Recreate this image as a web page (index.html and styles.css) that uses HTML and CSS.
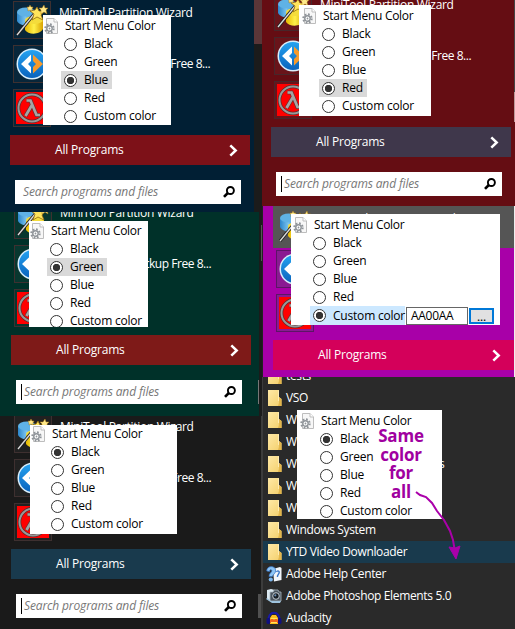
FILE: index.html
```
<!DOCTYPE html>
<html lang="en">
<head>
<meta charset="utf-8">
<title>Start Menu Color</title>
<link rel="stylesheet" href="styles.css">
</head>
<body>
<svg class="defs" aria-hidden="true">
  <defs>
    <linearGradient id="gBlue" x1="0" y1="0" x2="0" y2="1"><stop offset="0" stop-color="#25a2f0"/><stop offset="1" stop-color="#0a63bd"/></linearGradient>
    <linearGradient id="gFolder" x1="0" y1="0" x2="1" y2="1"><stop offset="0" stop-color="#ffe9a6"/><stop offset="1" stop-color="#f3cf6b"/></linearGradient>
    <linearGradient id="gYellow" x1="0" y1="0" x2="1" y2="0"><stop offset="0" stop-color="#e8b800"/><stop offset=".5" stop-color="#fff04a"/><stop offset="1" stop-color="#d9a300"/></linearGradient>
    <linearGradient id="gDisk" x1="0" y1="0" x2="1" y2="0"><stop offset="0" stop-color="#2b86cc"/><stop offset=".5" stop-color="#7cc4ee"/><stop offset="1" stop-color="#2273b5"/></linearGradient>
  </defs>
  <symbol id="wizard" viewBox="0 0 32 32">
    <path d="M1 8v9c2 5 13 6 17 3V8z" fill="url(#gDisk)"/>
    <ellipse cx="10" cy="8" rx="9" ry="4.500" fill="#5fb2e6"/>
    <path d="M9 17v9c3 5 15 5 18-1v-9z" fill="url(#gYellow)"/>
    <ellipse cx="18" cy="16" rx="9" ry="4" fill="#f4dc3c"/>
    <path d="M1 31L19 9" stroke="#222" stroke-width="3"/>
    <path d="M1 31L19 9" stroke="#ddd" stroke-width="1.300"/>
    <path d="M21 3l2 4 5 0-3 4 2 5-6-3-5 3 2-6-4-3 5-1z" fill="#ffe45c" stroke="#8e6812" stroke-width=".8"/>
    <path d="M28 1l1 3 3 0-2 2 1 4-3-2-3 2 0-4-2-2 3 0zM14 1l1 2 2 0-1 2 0 2-2-1-2 1 0-2-1-2 2 0z" fill="#ffe98a" stroke="#a97b12" stroke-width=".5"/>
  </symbol>
  <symbol id="backup" viewBox="0 0 32 32">
    <circle cx="16" cy="16" r="15.500" fill="#d9eefb"/>
    <circle cx="16" cy="16" r="14" fill="url(#gBlue)"/>
    <path d="M15 6.500L5 16l10 9.500v-6.500l-3-3 3-3z" fill="#fff"/>
    <path d="M17 6.500L27 16l-10 9.500v-6.500l3-3-3-3z" fill="#f79a2b"/>
  </symbol>
  <symbol id="lambda" viewBox="0 0 32 32">
    <path d="M0 0h32v32H0z" fill="#f00"/>
    <circle cx="16" cy="16" r="13.500" fill="none" stroke="#5c2c2c" stroke-width="3.400"/>
    <circle cx="16" cy="16" r="13.500" fill="none" stroke="#999" stroke-width="2"/>
    <path d="M10.500 8.500h4l6 14.500h3.500M16 13L9.500 24" fill="none" stroke="#6b3030" stroke-width="4.200"/>
    <path d="M10.500 8.500h4l6 14.500h3.500M16 13L9.500 24" fill="none" stroke="#a5a5a5" stroke-width="2.700"/>
  </symbol>
  <symbol id="page" viewBox="0 0 14 16">
    <path d="M2.500.5h7.500L13.500 4v11.500h-11z" fill="#f7f7f7" stroke="#bdbdbd"/>
    <path d="M10 .5V4h3.500" fill="#fff" stroke="#bdbdbd"/>
    <circle cx="5.500" cy="10.500" r="4.200" fill="none" stroke="#8f9499" stroke-width="2" stroke-dasharray="1.700 1.600"/>
    <circle cx="5.500" cy="10.500" r="2.700" fill="#fff" stroke="#8f9499" stroke-width="1.400"/>
    <circle cx="5.500" cy="10.500" r=".9" fill="#8f9499"/>
  </symbol>
  <symbol id="chevron" viewBox="0 0 9 13"><path d="M1.300 1.300L6.700 6.500 1.300 11.700" fill="none" stroke="#fff" stroke-width="2.500"/></symbol>
  <symbol id="search" viewBox="0 0 12 12"><circle cx="7.400" cy="4.500" r="3.500" fill="none" stroke="#000" stroke-width="1.900"/><path d="M4.800 7L1 10.900" stroke="#000" stroke-width="2.600"/></symbol>
  <symbol id="folder" viewBox="0 0 14 16">
    <path d="M0 0h11v7l2.500 2v7H0z" fill="url(#gFolder)"/>
    <path d="M11 7v6l-1 3h3.500V9z" fill="#e3b64c"/>
    <path d="M10.500.5V11" stroke="#fff0c0" stroke-width=".8"/>
  </symbol>
  <symbol id="help" viewBox="0 0 16 16">
    <path d="M7 3l7-2 1.500 1v12L8 15.500z" fill="#f2f6fb"/>
    <path d="M.7 5C.7-.5 9-.8 9.600 4c.5 3.500-2.600 4-3.200 6.500H3C3 7 6 6.500 5.800 4.600 5.500 3 3.500 3.500 3.600 5.500z" fill="#8cc4f5" stroke="#2f6fc0" stroke-width=".7"/>
    <circle cx="4.800" cy="13.500" r="2.100" fill="#7ab5ec"/>
    <path d="M10.500 6c1-2 3.500-1 2.500 1.200L11.500 10v1" fill="none" stroke="#3b78c8" stroke-width="1.400"/>
  </symbol>
  <symbol id="camera" viewBox="0 0 16 16">
    <path d="M1 2l4-1 4 1v10l-5 1-3-2z" fill="#dce9f2"/>
    <path d="M4 4h3l1-2h4l1 2h2v9H4z" fill="#4b555f" stroke="#aab8c2" stroke-width=".8"/>
    <circle cx="10" cy="8" r="3.300" fill="#171d24" stroke="#c3ccd4"/>
    <circle cx="9.300" cy="7.300" r="1.100" fill="#6b8fb5"/>
    <path d="M0 11l6 4h8l1-2H5L1 10z" fill="#9fc4df"/>
  </symbol>
  <symbol id="audacity" viewBox="0 0 16 16">
    <path d="M2.500 11C1 0 15 0 13.500 11" fill="none" stroke="#1a1aa8" stroke-width="2"/>
    <path d="M4 8l2-3h4l2 3v6H4z" fill="#ffbf1c"/>
    <path d="M4 10l2-2 2 2 2-2 2 2v3H4z" fill="#f0651c"/>
    <path d="M5 8.500h6M5 12.500h6" stroke="#ffe55a" stroke-width="1.200"/>
    <rect x=".5" y="8" width="3.500" height="6" rx="1.500" fill="#101080"/><rect x="12" y="8" width="3.500" height="6" rx="1.500" fill="#101080"/>
  </symbol>
</svg>

<main class="board">
  <div class="column left">
    <section class="panel blue">
      <ul class="programs">
        <li><span class="cell"><svg><use href="#wizard"/></svg></span><span class="name raised">MiniTool Partition Wizard</span></li>
        <li><span class="cell"><svg><use href="#backup"/></svg></span><span class="name long">EaseUS Todo Backup Free 8...</span></li>
        <li><span class="cell"><svg><use href="#lambda"/></svg></span></li>
      </ul>
      <div class="all"><span>All Programs</span><svg><use href="#chevron"/></svg></div>
      <div class="search"><span>Search programs and files</span><svg><use href="#search"/></svg></div>
      <div class="popup">
        <h2><svg><use href="#page"/></svg>Start Menu Color</h2>
        <p><i></i>Black</p><p><i></i>Green</p><p class="on"><i></i>Blue</p><p><i></i>Red</p><p><i></i>Custom color</p>
      </div>
    </section>
    <section class="panel green">
      <ul class="programs">
        <li><span class="cell"><svg><use href="#wizard"/></svg></span><span class="name raised">MiniTool Partition Wizard</span></li>
        <li><span class="cell"><svg><use href="#backup"/></svg></span><span class="name long">EaseUS Todo Backup Free 8...</span></li>
        <li><span class="cell"><svg><use href="#lambda"/></svg></span></li>
      </ul>
      <div class="all"><span>All Programs</span><svg><use href="#chevron"/></svg></div>
      <div class="search caret"><span>Search programs and files</span><svg><use href="#search"/></svg></div>
      <div class="popup">
        <h2><svg><use href="#page"/></svg>Start Menu Color</h2>
        <p><i></i>Black</p><p class="on"><i></i>Green</p><p><i></i>Blue</p><p><i></i>Red</p><p><i></i>Custom color</p>
      </div>
    </section>
    <section class="panel black">
      <ul class="programs">
        <li><span class="cell"><svg><use href="#wizard"/></svg></span><span class="name raised">MiniTool Partition Wizard</span></li>
        <li><span class="cell"><svg><use href="#backup"/></svg></span><span class="name long">EaseUS Todo Backup Free 8...</span></li>
        <li><span class="cell"><svg><use href="#lambda"/></svg></span></li>
      </ul>
      <div class="all"><span>All Programs</span><svg><use href="#chevron"/></svg></div>
      <div class="search caret"><span>Search programs and files</span><svg><use href="#search"/></svg></div>
      <div class="popup">
        <h2><svg><use href="#page"/></svg>Start Menu Color</h2>
        <p class="on plain"><i></i>Black</p><p><i></i>Green</p><p><i></i>Blue</p><p><i></i>Red</p><p><i></i>Custom color</p>
      </div>
    </section>
  </div>

  <div class="column right">
    <section class="panel red">
      <ul class="programs">
        <li><span class="cell"><svg><use href="#wizard"/></svg></span><span class="name raised">MiniTool Partition Wizard</span></li>
        <li><span class="cell"><svg><use href="#backup"/></svg></span><span class="name long">EaseUS Todo Backup Free 8...</span></li>
        <li><span class="cell"><svg><use href="#lambda"/></svg></span></li>
      </ul>
      <div class="all"><span>All Programs</span><svg><use href="#chevron"/></svg></div>
      <div class="search caret"><span>Search programs and files</span><svg><use href="#search"/></svg></div>
      <div class="popup">
        <h2><svg><use href="#page"/></svg>Start Menu Color</h2>
        <p><i></i>Black</p><p><i></i>Green</p><p><i></i>Blue</p><p class="on"><i></i>Red</p><p><i></i>Custom color</p>
      </div>
    </section>
    <section class="panel purple">
      <ul class="programs">
        <li class="hover"><span class="cell"><svg><use href="#wizard"/></svg></span><span class="name raised">MiniTool Partition Wizard</span></li>
        <li><span class="cell"><svg><use href="#backup"/></svg></span></li>
        <li><span class="cell"><svg><use href="#lambda"/></svg></span></li>
      </ul>
      <div class="all"><span>All Programs</span><svg><use href="#chevron"/></svg></div>
      <div class="popup">
        <h2><svg><use href="#page"/></svg>Start Menu Color</h2>
        <p><i></i>Black</p><p><i></i>Green</p><p><i></i>Blue</p><p><i></i>Red</p>
        <div class="custom"><p class="on"><i></i>Custom color</p><span class="hex">AA00AA</span><span class="more">...</span></div>
      </div>
    </section>
    <section class="panel list">
      <ul class="folders">
        <li><svg class="f"><use href="#folder"/></svg>tests</li>
        <li><svg class="f"><use href="#folder"/></svg>VSO</li>
        <li><svg class="f"><use href="#folder"/></svg>W</li>
        <li><svg class="f"><use href="#folder"/></svg>W</li>
        <li><svg class="f"><use href="#folder"/></svg>Windows Administrative Tools</li>
        <li><svg class="f"><use href="#folder"/></svg>W</li>
        <li><svg class="f"><use href="#folder"/></svg>W</li>
        <li><svg class="f"><use href="#folder"/></svg>Windows System</li>
        <li class="hover"><svg class="f"><use href="#folder"/></svg>YTD Video Downloader</li>
        <li><svg><use href="#help"/></svg>Adobe Help Center</li>
        <li><svg><use href="#camera"/></svg>Adobe Photoshop Elements 5.0</li>
        <li><svg><use href="#audacity"/></svg>Audacity</li>
      </ul>
      <div class="popup">
        <h2><svg><use href="#page"/></svg>Start Menu Color</h2>
        <p class="on plain"><i></i>Black</p><p><i></i>Green</p><p><i></i>Blue</p><p><i></i>Red</p><p><i></i>Custom color</p>
      </div>
      <div class="note"><span>Same</span><span>color</span><span>for</span><span>all</span></div>
      <svg class="arrow" viewBox="0 0 60 74"><path d="M7 4l4 3 6 2 6 6 5 8 7 9 6 11 3 9 2 12" fill="none" stroke="#a0a" stroke-width="2"/><path d="M40 59l6 1 5-2-4 13z" fill="#a0a" stroke="#a0a"/></svg>
    </section>
  </div>
</main>
</body>
</html>
```
FILE: styles.css
```
* { box-sizing: border-box; margin: 0; padding: 0; }
body {
  width: 515px; height: 629px; overflow: hidden;
  font: 12px/18px "Open Sans", "Noto Sans", sans-serif;
  letter-spacing: -0.2px;
  background: #1b1b1b;
}
.defs { position: absolute; width: 0; height: 0; }
ul { list-style: none; }
.board { display: grid; grid-template-columns: 262px 253px; height: 629px; }
.left { display: grid; grid-template-rows: 212px 204px 213px; }
.right { display: grid; grid-template-rows: 206px 171px 252px; }
.panel {
  position: relative; overflow: hidden; min-height: 0;
  display: flex; flex-direction: column; justify-content: flex-end;
  white-space: nowrap;
}
.programs { flex: none; display: flex; flex-direction: column; gap: 6px; margin: 0 0 8px 3px; color: #fff; }
.programs li { display: flex; height: 38px; align-items: center; gap: 8px; }
.cell { flex: none; width: 38px; height: 38px; padding: 2px; border: 1px solid #3e3030; background: rgba(255,255,255,.03); }
.cell svg { display: block; width: 32px; height: 32px; }
.name { width: 152px; letter-spacing: -0.3px; }
.long { letter-spacing: -0.46px; }
.raised { margin-bottom: 14px; }
.all {
  flex: none; width: 240px; height: 30px; padding: 0 12px 0 45px;
  display: flex; align-items: center; justify-content: space-between; color: #fff;
}
.all svg { width: 9px; height: 13px; }
.search {
  flex: none; width: 226px; height: 24px; margin: 15px 0 0 5px; padding: 0 6px 0 8px;
  display: flex; align-items: center; justify-content: space-between;
  background: #fff; color: #777; font-style: italic; letter-spacing: -0.14px;
}
.search svg { width: 12px; height: 12px; }
.caret { padding-left: 5px; }
.caret span { border-left: 1px solid #000; padding-left: 2px; line-height: 16px; }

.blue {
  padding: 0 0 8px 10px;
  background:
    linear-gradient(#5a3638, #5a3638) 254px 0 / 8px 44px no-repeat,
    linear-gradient(#011f34, #011f34) 0 0 / 254px 100% no-repeat, #1b1b1b;
}
.blue .all { background: #7d1118; }
.green {
  padding: 0 0 12px 11px;
  background:
    linear-gradient(#555, #555) 261px 13px / 1px 36px no-repeat,
    linear-gradient(#777, #777) 258px 168px / 1px 24px no-repeat,
    linear-gradient(#003129, #003129) 0 0 / 259px 100% no-repeat, #1b1b1b;
}
.green .all { background: #7e1a18; }
.black {
  padding: 0 0 11px 11px; border-right: 1px solid #3c3c3c;
  background: linear-gradient(#505050, #505050) 258px 178px / 3px 24px no-repeat, #1a1a1a;
}
.black .all { background: #193a4d; }
.red {
  padding: 0 0 10px 9px;
  background: linear-gradient(#444 92px, #b99 92px, #b99 122px, #650d13 122px) 252px 0 / 1px 100% no-repeat, #650d13;
}
.red .cell { border-color: #47262a; }
.red .all { background: #3f374b; }
.purple {
  padding: 0 0 7px 10px; border-left: 1px solid #222;
  background: linear-gradient(#eee, #eee) 251px 0 / 1px 100% no-repeat, #a800a8;
}
.purple .all { background: #d4005a; width: 241px; padding-right: 13px; }
.purple .hover { background: #555; height: 45px; margin: 0 0 -4px -3px; padding-left: 3px; width: 241px; }
.purple .hover .cell { border-color: transparent; }
.purple .cell { border-color: #5c1566; background: #8a1a92; }
.purple .hover .cell { background: none; }
.list { background: #2a2a2a; border-left: 1px solid #3c3c3c; }

.popup {
  position: absolute; background: #fff; color: #000;
  display: flex; flex-direction: column; align-items: flex-start; overflow: hidden;
}
.popup h2 { position: relative; flex: none; font: inherit; height: 18px; padding-left: 22px; letter-spacing: -0.3px; }
.popup h2 svg { position: absolute; left: 1px; top: 1px; width: 14px; height: 16px; }
.popup p { flex: none; display: flex; align-items: center; gap: 7px; height: 18px; margin-left: 18px; padding: 0 4px 0 3px; }
.popup i { flex: none; width: 13px; height: 13px; border: 1px solid #333; border-radius: 50%; background: #fff; }
.popup .on { background: #d9d9d9; }
.popup .plain { background: none; }
.popup .on i { background: radial-gradient(circle, #333 3.400px, #fff 4px); }
.blue .popup { left: 43px; top: 15px; width: 128px; height: 110px; padding-top: 2px; }
.green .popup { left: 29px; top: 9px; width: 119px; height: 106px; padding-top: 1px; }
.black .popup { left: 30px; top: 9px; width: 147px; height: 109px; }
.red .popup { left: 37px; top: 5px; width: 132px; height: 111px; padding: 2px 0 0 2px; }
.purple .popup { left: 28px; top: 8px; width: 209px; height: 111px; padding: 2px 0 0 1px; }
.list .popup { left: 34px; top: 33px; width: 145px; height: 109px; padding: 2px 0 0 2px; }
.popup .custom { display: flex; align-items: center; }
.popup .custom .on { background: #cce8ff; width: 95px; padding-right: 0; height: 19px; }
.hex { flex: none; width: 62px; height: 18px; margin-left: 1px; padding-left: 4px; border: 1px solid #666; line-height: 15px; letter-spacing: -0.3px; }
.more { flex: none; width: 25px; height: 16px; margin-left: 1px; border: 2px solid #0078d7; background: #e1e1e1; text-align: center; line-height: 13px; }

.folders { flex: none; color: #fff; letter-spacing: -0.35px; }
.folders li { display: flex; align-items: center; height: 22px; gap: 4px; padding-left: 3px; }
.folders .hover { background: #193a4d; }
.folders svg { flex: none; width: 16px; height: 16px; }
.folders .f { width: 14px; margin: 0 0 0 2px; }
.note {
  position: absolute; left: 114px; top: 50px; width: 48px;
  display: flex; flex-direction: column; align-items: center;
  font: bold 17px/18.500px "Open Sans", sans-serif; color: #a000a0;
}
.arrow { position: absolute; left: 146px; top: 111px; width: 60px; height: 74px; }
```
